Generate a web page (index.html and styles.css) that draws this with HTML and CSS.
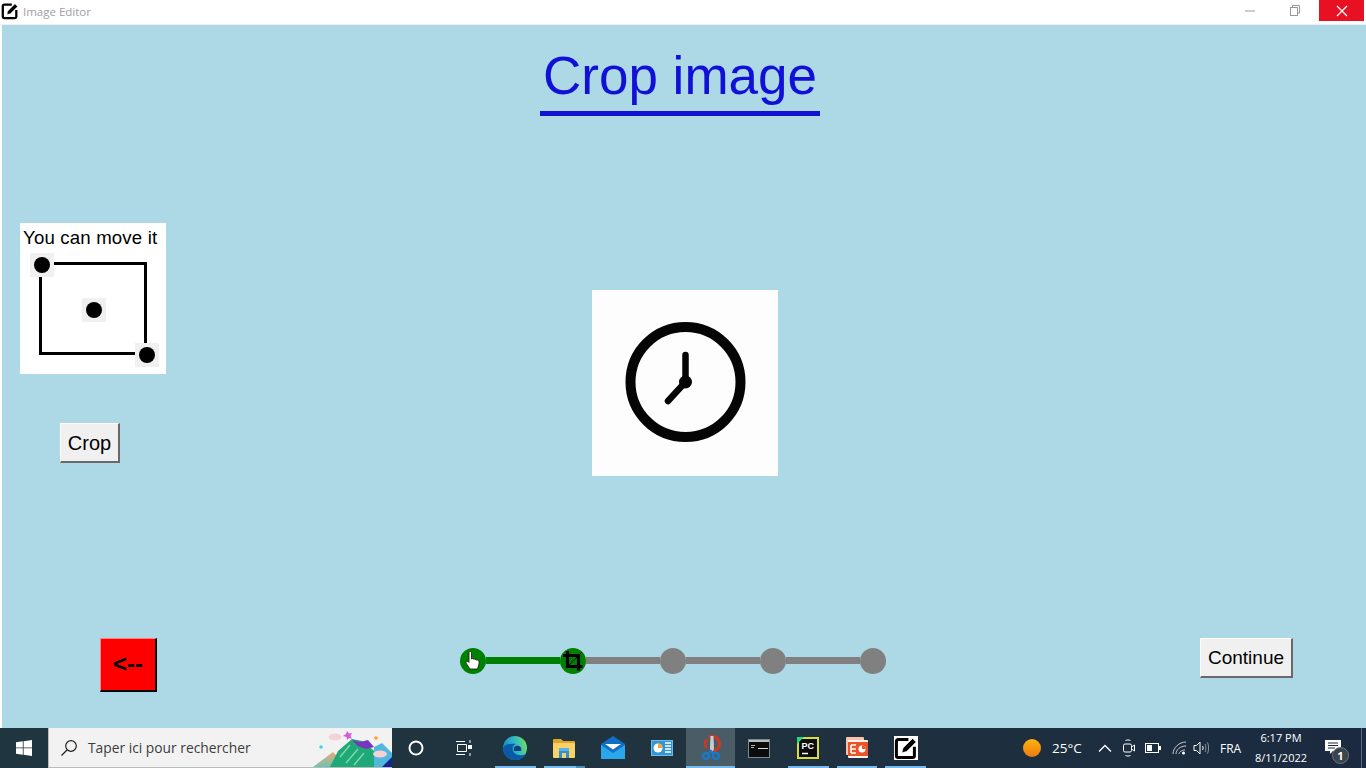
FILE: index.html
```html
<!DOCTYPE html>
<html lang="en">
<head>
<meta charset="utf-8">
<title>Image Editor</title>
<link rel="stylesheet" href="styles.css">
</head>
<body>
<svg class="defs" width="0" height="0" aria-hidden="true">
  <symbol id="editor" viewBox="0 0 20 20">
    <path d="M12 3H3.500A1.500 1.500 0 0 0 2 4.500V16.500A1.500 1.500 0 0 0 3.500 18H15.500A1.500 1.500 0 0 0 17 16.500V9" fill="#fff" stroke="#000" stroke-width="2.500"/>
    <path d="M6.500 14 7.500 10 15.500 2 18.500 5 10.500 13Z" fill="#000" stroke="#fff" stroke-width=".6"/>
  </symbol>
</svg>
<div class="app">
  <header class="titlebar">
    <svg class="app-icon" width="18" height="18"><use href="#editor"/></svg>
    <span class="window-title">Image Editor</span>
    <div class="window-controls">
      <div class="wc"><svg width="12" height="12" viewBox="0 0 12 12"><path d="M1 6H11" stroke="#999" stroke-width="1"/></svg></div>
      <div class="wc"><svg width="12" height="12" viewBox="0 0 12 12" fill="none" stroke="#999"><path d="M3.500 2.500V.5H10.500V8H8.500"/><rect x="1.500" y="2.500" width="7" height="8"/></svg></div>
      <div class="wc wc-close"><svg width="12" height="12" viewBox="0 0 12 12"><path d="M1 1 11 11M11 1 1 11" stroke="#fff" stroke-width="1.300"/></svg></div>
    </div>
  </header>

  <main class="content">
    <h1 class="heading"><span class="heading-text">Crop image</span></h1>

    <section class="workspace">
      <div class="tools">
        <div class="hint">
          <p class="hint-text">You can move it</p>
          <svg class="hint-art" width="146" height="124" viewBox="0 0 146 124">
            <rect x="20.500" y="16.500" width="105" height="90" fill="none" stroke="#000" stroke-width="3"/>
            <rect x="10" y="6" width="24" height="24" fill="#f0f0f0"/><circle cx="22" cy="18" r="8"/>
            <rect x="62" y="51" width="24" height="24" fill="#f0f0f0"/><circle cx="74" cy="63" r="8"/>
            <rect x="115" y="96" width="24" height="24" fill="#f0f0f0"/><circle cx="127" cy="108" r="8"/>
          </svg>
        </div>
        <button class="btn btn-crop" type="button">Crop</button>
      </div>
      <div class="picture">
        <svg width="186" height="186" viewBox="0 0 186 186">
          <circle cx="93.500" cy="92" r="55" fill="none" stroke="#050505" stroke-width="10"/>
          <path d="M93.500 65V92L76 111" fill="none" stroke="#050505" stroke-width="6.500" stroke-linecap="round" stroke-linejoin="round"/>
          <circle cx="93.500" cy="92" r="6.500" fill="#050505"/>
        </svg>
      </div>
    </section>

    <section class="footer-row">
      <button class="btn btn-back" type="button">&lt;--</button>
      <div class="stepper">
        <div class="dot dot-done">
          <svg width="18" height="22" viewBox="0 0 18 22"><path d="M5 2.500C5 1 7.500 1 7.500 2.500V9L8.500 8.500 9.500 9 11 9 12 9.800 13.500 10C15 10.500 15.300 12 15 14L13.500 19H6L2 13C1.500 11.500 3 10.700 4 11.500L5 12.500Z" fill="#fff" stroke="#222" stroke-width=".9"/></svg>
        </div>
        <div class="link link-done"></div>
        <div class="dot dot-done">
          <svg width="22" height="22" viewBox="0 0 22 22"><path d="M5.500 1V16.500H20.500M1 5.500H16.500V20.500" fill="none" stroke="#000" stroke-width="3.200"/><path d="M7 15 20 2" stroke="#000" stroke-width="1"/></svg>
        </div>
        <div class="link"></div>
        <div class="dot"></div>
        <div class="link"></div>
        <div class="dot"></div>
        <div class="link"></div>
        <div class="dot"></div>
      </div>
      <button class="btn btn-continue" type="button">Continue</button>
    </section>
  </main>

  <footer class="taskbar">
    <div class="start">
      <svg width="16" height="16" viewBox="0 0 16 16" fill="#fff"><path d="M0 2.300 6.800 1.300V7.500H0ZM7.600 1.200 16 0V7.500H7.600ZM0 8.300H6.800V14.700L0 13.700ZM7.600 8.300H16V16L7.600 14.800Z"/></svg>
    </div>
    <div class="search">
      <svg class="search-icon" width="18" height="18" viewBox="0 0 18 18" fill="none" stroke="#222" stroke-width="1.200"><circle cx="11" cy="7" r="5.300"/><path d="M7 11 1.500 16.500"/></svg>
      <span class="search-text">Taper ici pour rechercher</span>
      <svg class="search-art" width="80" height="40" viewBox="0 0 80 40">
        <defs>
          <linearGradient id="peak" x1="0" y1="0" x2="0" y2="1"><stop offset="0" stop-color="#eea878"/><stop offset="1" stop-color="#6fc3b0"/></linearGradient>
        </defs>
        <path d="M1 40 21 25 36 40Z" fill="url(#peak)"/>
        <path d="M18 40 26 24 40 12 50 14 60 22 70 32 62 40Z" fill="#1fa878"/>
        <path d="M28 30 38 18M34 36 46 22M42 38 52 26" stroke="#7ed8a8" stroke-width="1.500"/>
        <path d="M40 13 48 15 56 13 62 20 54 22 46 19Z" fill="#7a35c0"/>
        <path d="M62 20 70 16 80 26V40H62Z" fill="#52b7dc"/>
        <path d="M70 40 80 30V40Z" fill="#16278c"/>
        <ellipse cx="23" cy="10" rx="6.500" ry="3.500" fill="#f3d3d5"/>
        <ellipse cx="68" cy="27" rx="7" ry="3.500" fill="#f3d3d5"/>
        <path d="M35 4 37 6.500 40 6 38.500 9 40 12 37 11 35 13 34.500 10 31 9 34 7Z" fill="#d65ad8"/>
        <circle cx="64" cy="11" r="1.800" fill="#f9a51b"/>
        <circle cx="9" cy="20" r="1.800" fill="#3fd3ec"/>
      </svg>
    </div>
    <div class="tb-tool">
      <svg width="18" height="18" viewBox="0 0 18 18"><circle cx="9" cy="9" r="6.500" fill="none" stroke="#fff" stroke-width="2"/></svg>
    </div>
    <div class="tb-tool">
      <svg width="18" height="16" viewBox="0 0 18 16" fill="none" stroke="#fff"><path d="M1 1.500H10M1 14.500H10M2.500 4.500H11.500V11.500H2.500Z"/><path d="M15 0V3M15 13V16"/><rect x="13.500" y="5.500" width="3" height="3" fill="#fff"/></svg>
    </div>
    <div class="apps">
      <div class="app-btn running">
        <svg width="26" height="26" viewBox="0 0 26 26"><defs><linearGradient id="e1" x1="0" y1=".6" x2="1" y2=".3"><stop offset="0" stop-color="#1384d0"/><stop offset=".55" stop-color="#2fb8c8"/><stop offset="1" stop-color="#6fe060"/></linearGradient></defs><circle cx="13" cy="13" r="12" fill="url(#e1)"/><path d="M1 13C1 20 7 25 13 25 18 25 22 23 24 19 20 21 13 21 11 16 10 13 11 10 14 9 9 8 3 9 1 13Z" fill="#0b5aa8"/><path d="M14 11C18 10 20 13 19 16H12C11.500 13 12 12 14 11Z" fill="#0d3f7f"/></svg>
      </div>
      <div class="app-btn running split">
        <svg width="24" height="20" viewBox="0 0 24 20"><path d="M1 2A1 1 0 0 1 2 1H9L11 3H22A1 1 0 0 1 23 4V6H1Z" fill="#e0a52b"/><rect x="1" y="5" width="22" height="15" rx="1" fill="#fad165"/><rect x="7" y="10" width="10" height="10" fill="#2f8fd8"/><rect x="10" y="15" width="4" height="5" fill="#fad165"/><rect x="7" y="10" width="10" height="3" fill="#56b4ea"/></svg>
      </div>
      <div class="app-btn">
        <svg width="24" height="24" viewBox="0 0 24 24"><path d="M0 8 12 0 24 8V23H0Z" fill="#0f6fc4"/><path d="M0 9 12 17 24 9V23H0Z" fill="#2aa7ec"/><path d="M4 8H20L12 13.500Z" fill="#fff"/></svg>
      </div>
      <div class="app-btn">
        <svg width="22" height="16" viewBox="0 0 22 16"><rect width="22" height="16" fill="#6dbde8"/><rect x="1" y="1" width="20" height="14" fill="#3794d2"/><circle cx="7" cy="8" r="4.500" fill="#fff"/><path d="M7 8V3.500A4.500 4.500 0 0 1 11.500 8Z" fill="#f2a72e"/><path d="M14 3H20M14 6H20M14 9H20M14 12H20" stroke="#fff" stroke-width="1.500"/></svg>
      </div>
      <div class="app-btn active">
        <svg width="20" height="26" viewBox="0 0 20 26"><path d="M8 2C14 0 19 4 18.500 10 18 14 15 16 12 16" fill="none" stroke="#d2361c" stroke-width="3"/><path d="M6 4C3 7 4 11 6 13" fill="none" stroke="#d2361c" stroke-width="2.500"/><path d="M9.500 1H12.500L13 14 11 18 9 14Z" fill="#c9ced1"/><circle cx="5" cy="21" r="3" fill="none" stroke="#1a78c8" stroke-width="2.500"/><circle cx="15" cy="21" r="3" fill="none" stroke="#1a78c8" stroke-width="2.500"/><path d="M7 19 10 16 13 19" fill="none" stroke="#1a78c8" stroke-width="2"/></svg>
      </div>
      <div class="app-btn">
        <svg width="22" height="19" viewBox="0 0 22 19"><rect x=".5" y=".5" width="21" height="18" fill="#0c0c0c" stroke="#7f8a90"/><rect x="1" y="1" width="20" height="2" fill="#b9c0c4"/><path d="M3 6.500H7M3 8.500H6" stroke="#b8b8b8"/><path d="M10 9.500H20" stroke="#d8d8d8" stroke-width="1"/></svg>
      </div>
      <div class="app-btn running">
        <svg width="22" height="22" viewBox="0 0 22 22"><rect width="22" height="22" fill="#d7dd3c"/><rect x="2" y="2" width="18" height="18" fill="#0c0c0c"/><path d="M0 0H7L0 7Z" fill="#21d789"/><text class="pc-glyph" x="4.500" y="12">PC</text><path d="M5 16.500H11" stroke="#fff" stroke-width="1.500"/></svg>
      </div>
      <div class="app-btn running">
        <svg width="24" height="24" viewBox="0 0 24 24"><rect x="1" y="1" width="18" height="18" rx="1" fill="#f8c5ac"/><rect x="3" y="4" width="20" height="18" rx="1" fill="#fff3ec"/><rect x="3" y="6" width="20" height="14" fill="#e8552b"/><path d="M6 9H11M6 13H11M6 17H11M6 9V17" stroke="#fff" stroke-width="1.600" fill="none"/><circle cx="17" cy="13" r="3.500" fill="#fff"/><path d="M17 13V9.500A3.500 3.500 0 0 1 20.500 13Z" fill="#e8552b"/></svg>
      </div>
      <div class="app-btn running">
        <svg class="editor-tile" width="24" height="24"><use href="#editor"/></svg>
      </div>
    </div>
    <div class="tray">
      <svg class="tray-sun" width="18" height="18" viewBox="0 0 18 18"><defs><linearGradient id="sun" x1="0" y1="0" x2="0" y2="1"><stop offset="0" stop-color="#fdb60d"/><stop offset="1" stop-color="#ee7a10"/></linearGradient></defs><circle cx="9" cy="9" r="9" fill="url(#sun)"/></svg>
      <span class="tray-temp">25°C</span>
      <svg class="tray-chevron" width="14" height="8" viewBox="0 0 14 8" fill="none" stroke="#fff" stroke-width="1.300"><path d="M1 7.500 7 1.500 13 7.500"/></svg>
      <svg class="tray-cam" width="12" height="18" viewBox="0 0 12 18" fill="none" stroke="#fff"><path d="M2.500 1.500C4 .8 6 .8 7.500 1.500M2.500 16.500C4 17.200 6 17.200 7.500 16.500"/><rect x=".5" y="5" width="8" height="8" rx="1.500"/><path d="M8.500 8 11.500 6V12L8.500 10"/></svg>
      <svg class="tray-battery" width="16" height="10" viewBox="0 0 16 10"><rect x=".5" y=".5" width="13" height="9" fill="none" stroke="#fff"/><rect x="2" y="2" width="5" height="6" fill="#fff"/><rect x="14" y="3" width="2" height="4" fill="#fff"/></svg>
      <svg class="tray-wifi" width="16" height="14" viewBox="0 0 16 14" fill="none" stroke="#c8ced2"><path d="M1 13C1 7 7 1 14 1M4 13C4 9 8 5 14 5M7 13C7 11 10 9 13 9"/><circle cx="11.500" cy="12" r="1.500" fill="#fff" stroke="none"/></svg>
      <svg class="tray-volume" width="16" height="14" viewBox="0 0 16 14" fill="none" stroke="#fff"><path d="M1 4.500H3.500L7 1V13L3.500 9.500H1Z"/><path d="M9.500 5C10.300 6 10.300 8 9.500 9"/><path d="M12 3C13.200 5 13.200 9 12 11M14.500 1.500C16 5 16 9 14.500 12.500" stroke="#8b979e"/></svg>
      <span class="tray-lang">FRA</span>
      <div class="tray-clock"><span>6:17 PM</span><span>8/11/2022</span></div>
      <div class="tray-note">
        <svg class="note-icon" width="17" height="16" viewBox="0 0 17 16"><path d="M0 0H16V11H8L5 14V11H0Z" fill="#fff"/><path d="M3 3H13M3 5.500H13M3 8H10" stroke="#1c2a40"/></svg>
        <span class="note-badge">1</span>
      </div>
      <div class="tray-peek"></div>
    </div>
  </footer>
</div>
</body>
</html>
```

FILE: styles.css
```css
* { box-sizing: border-box; }
html, body { margin: 0; padding: 0; height: 100%; overflow: hidden; }
body { background: #fff; font-family: "Liberation Sans", Arial, sans-serif; }
.defs { position: absolute; }
.app { width: 1366px; height: 768px; display: flex; flex-direction: column; }

/* window chrome */
.titlebar { height: 25px; flex: none; display: flex; align-items: flex-start; background: #fff; border-bottom: 1px solid #f1efee; }
.app-icon { margin: 2px 0 0 1px; }
.window-title { margin: 4px 0 0 4px; font: 11.500px/15px "Open Sans", sans-serif; color: #a09ea6; }
.window-controls { margin-left: auto; display: flex; margin-right: 2px; }
.wc { width: 45px; height: 21px; padding-right: 3px; display: flex; align-items: center; justify-content: center; }
.wc-close { background: #e81123; padding-right: 0; }

/* main canvas */
.content { flex: 1; margin-left: 2px; background: #add8e6; display: flex; flex-direction: column; min-height: 0; }
.heading { margin: 18px 0 0 538px; width: 280px; height: 73px; font-weight: 400; font-size: 53px; line-height: 66px; color: #1010d6; text-align: center; white-space: nowrap; border-bottom: 5px solid #1010d6; }
.heading-text { display: block; }

.workspace { display: flex; align-items: flex-start; margin-top: 107px; padding-left: 18px; }
.tools { width: 146px; display: flex; flex-direction: column; align-items: flex-start; }
.hint { width: 146px; height: 151px; background: #fff; display: flex; flex-direction: column; }
.hint-text { margin: 4px 0 0 3px; font-size: 18.670px; line-height: 22px; letter-spacing: .15px; color: #000; white-space: nowrap; }
.hint-art { display: block; margin-top: -2px; }
.picture { margin: 67px 0 0 426px; width: 186px; height: 186px; background: #fdfdfd; }
.picture svg { display: block; }

.btn { font-family: "Liberation Sans", Arial, sans-serif; font-size: 20px; color: #000; background: #f0f0f0; border: 1px solid; border-color: #fff #696969 #696969 #fff; border-right-width: 2px; border-bottom-width: 2px; padding: 2px 0 0; }
.btn-crop { width: 60px; height: 40px; margin: 49px 0 0 40px; }
.footer-row { display: flex; align-items: flex-start; margin-top: 162px; padding-left: 98px; }
.btn-back { width: 57px; height: 54px; background: #ff0000; border-color: #ff8080 #000 #000 #ff8080; font-weight: 700; font-size: 24px; line-height: 1; padding: 0 0 2px; }
.btn-continue { width: 93px; height: 40px; margin-left: 314px; font-size: 19px; padding: 0; }

.stepper { margin: 10px 0 0 303px; width: 426px; display: flex; align-items: center; height: 26px; }
.dot { width: 26px; height: 26px; flex: none; border-radius: 50%; background: #808080; display: flex; align-items: center; justify-content: center; }
.dot-done { background: #008000; }
.link { width: 74px; height: 7px; background: #808080; flex: none; margin-bottom: 1px; }
.link-done { background: #008000; }

/* taskbar */
.taskbar { height: 40px; flex: none; display: flex; align-items: stretch; background: linear-gradient(90deg, #1f3640 0%, #20333f 50%, #1b2a40 100%); color: #fff; }
.start { width: 48px; display: flex; align-items: center; justify-content: center; }
.search { width: 344px; background: #f2f2f2; border-left: 1px solid #b8bcbe; border-bottom: 1px solid #b8bcbe; display: flex; align-items: center; position: relative; }
.search-icon { margin-left: 11px; }
.search-text { margin: 1px 0 0 10px; font: 13.800px/20px "Open Sans", sans-serif; color: #3d3d3d; }
.search-art { position: absolute; right: 0; bottom: 0; }
.tb-tool { width: 48px; display: flex; align-items: center; justify-content: center; }
.apps { display: flex; margin-left: 3px; }
.app-btn { width: 48.800px; display: flex; align-items: center; justify-content: center; position: relative; }
.app-btn.running::after { content: ""; position: absolute; left: 4px; right: 4px; bottom: 0; height: 2px; background: #76b9ed; }
.app-btn.split::before { content: ""; position: absolute; right: 4px; width: 9px; bottom: 0; height: 2px; background: #4d8db8; z-index: 1; }
.app-btn.active { background: #4a5c66; }
.app-btn.active::after { content: ""; position: absolute; left: 0; right: 0; bottom: 0; height: 2px; background: #76b9ed; }
.pc-glyph { font: 700 9px "Liberation Sans", sans-serif; fill: #fff; }
.editor-tile { background: #fff; }

.tray { margin-left: auto; display: flex; align-items: center; font-family: "Open Sans", sans-serif; color: #fff; }
.tray-temp { font-size: 13.500px; margin-left: 11px; width: 36px; }
.tray-chevron { margin-left: 10px; }
.tray-cam { margin-left: 11px; }
.tray-battery { margin-left: 10px; }
.tray-wifi { margin-left: 11px; }
.tray-volume { margin-left: 5px; }
.tray-lang { font-size: 12px; margin-left: 11px; width: 26px; }
.tray-clock { width: 70px; display: flex; flex-direction: column; align-items: center; font-size: 11px; line-height: 20px; }
.tray-note { width: 26px; height: 26px; margin: 0 10px 0 9px; position: relative; }
.note-icon { display: block; margin-top: 5px; }
.note-badge { position: absolute; left: 7px; top: 12px; width: 17px; height: 17px; border-radius: 50%; background: #3a444c; border: 1px solid #6d757b; color: #fff; font-size: 11px; font-weight: 700; line-height: 15px; text-align: center; }
.tray-peek { width: 5px; height: 40px; border-left: 1px solid #5b6878; }
```
